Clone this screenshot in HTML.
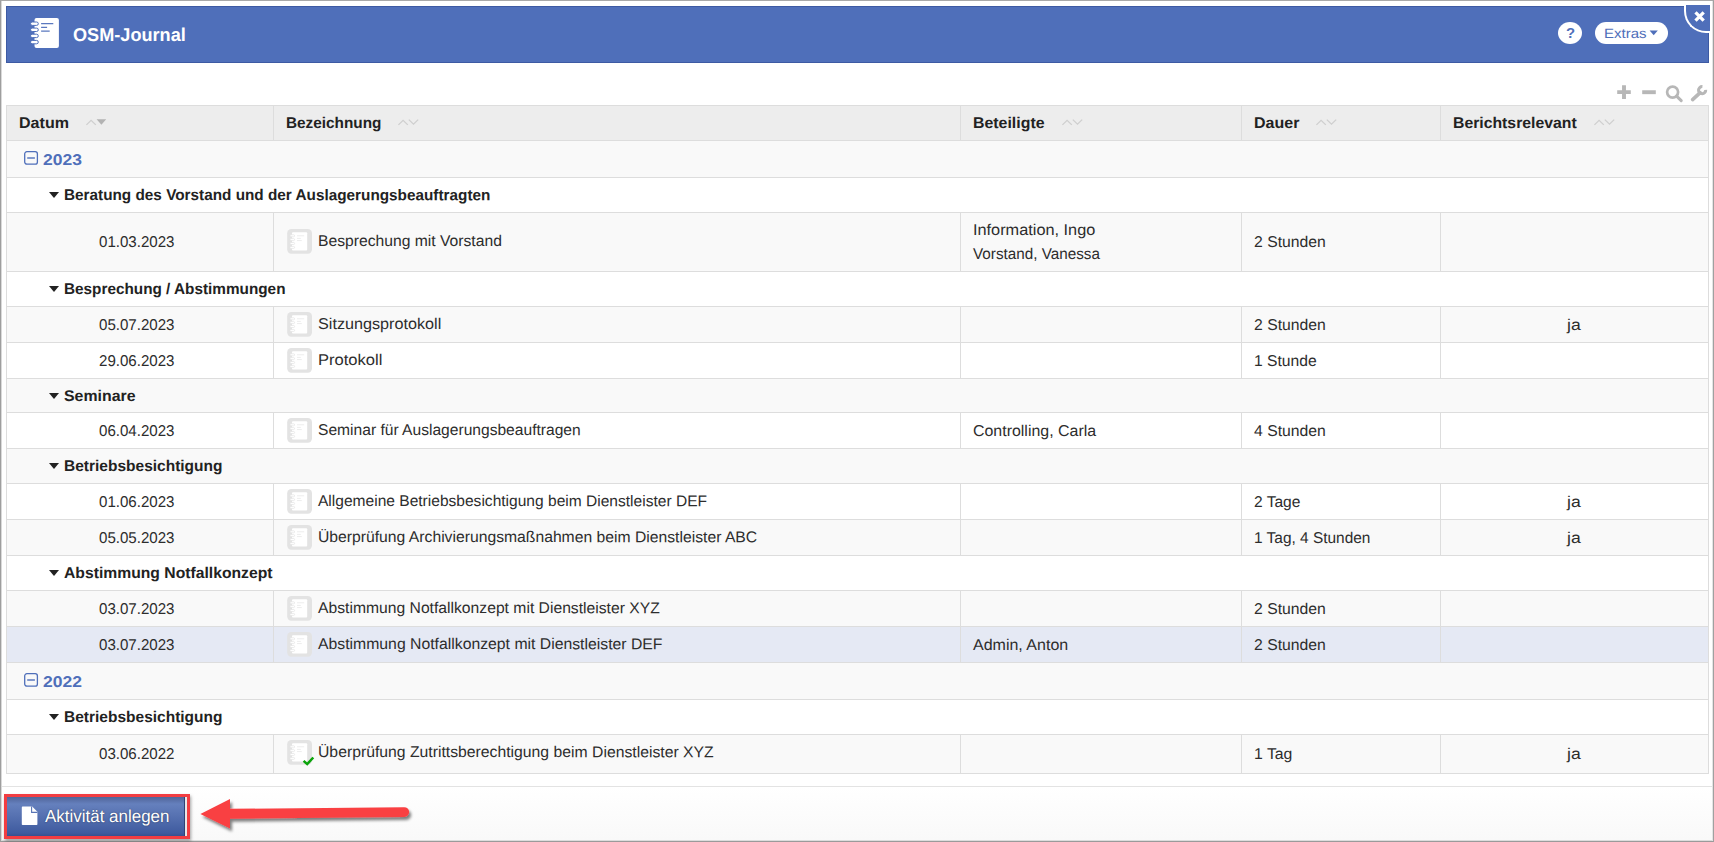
<!DOCTYPE html>
<html><head><meta charset="utf-8">
<style>
*{box-sizing:border-box;margin:0;padding:0}
html,body{width:1714px;height:842px;overflow:hidden;background:#fff}
body{position:relative;font-family:"Liberation Sans",sans-serif;font-size:14.5px;color:#333}
.abs{position:absolute}
#frame{left:0;top:0;width:1714px;height:842px;border-top:1px solid #a9a9a9;border-left:1px solid #9e9e9e;border-right:1px solid #a0a0a0;border-bottom:1px solid #9a9a9a;box-shadow:inset 1px 0 0 #d9d9d9,inset -1px 0 0 #e4e4e4, inset 0 -1px 0 #dcdcdc}
#hdr{left:6px;top:6px;width:1703px;height:57px;background:#4f6fba;border:1px solid #3d5aa3}
#title{left:73px;top:22px;font-weight:bold;font-size:17.5px;color:#fff;line-height:24px;white-space:nowrap}
#close{left:1684px;top:5px;width:26px;height:28px;background:#4f6fba;border-left:2px solid #fff;border-bottom:2px solid #fff;border-bottom-left-radius:22px}
#help{left:1558px;top:22px;width:24px;height:22px;border-radius:50%;background:#fff;color:#4f6fba;font-weight:bold;font-size:14px;text-align:center;line-height:22px}
#extras{left:1595px;top:22px;width:73px;height:22px;border-radius:11px;background:#fff;color:#4f6fba;font-size:14.5px;line-height:22px;padding-left:10px;white-space:nowrap}
#tbl{left:6px;top:105px;width:1703px;height:669px;border:1px solid #ddd}
.row{position:absolute;left:7px;width:1701px;border-bottom:1px solid #ddd}
.odd{background:#f9f9f9}
.hl{background:#e5e9f4}
.th{background:#ededed}
.c{position:absolute;top:0;bottom:0;border-left:1px solid #ddd}
.t{position:absolute;white-space:nowrap;line-height:20px;transform-origin:0 50%}
.vl{width:1px;background:#ddd}
.hl{left:7px;width:1701px;height:1px;background:#ddd}
.b{font-weight:bold;color:#222}
.yr{color:#4f6fba;font-weight:bold;font-size:16.5px}
.tri{position:absolute;width:0;height:0;border-left:5px solid transparent;border-right:5px solid transparent;border-top:6px solid #222}
.ic{position:absolute;left:280px;width:25px;height:25px;border-radius:5px;background:#e4e4e4}
.ic i{position:absolute;left:6px;top:4px;width:14px;height:17px;background:#fff;border-radius:1px}
#foot{left:2px;top:786px;width:1710px;height:54px;border-top:1px solid #e3e3e3;background:linear-gradient(#fff,#f9f9f9)}
#btn{left:4px;top:794px;width:186px;height:45px;border:3px solid #f23d42;background:#e8e8e8;box-shadow:1px 2px 3px rgba(0,0,0,.35)}
#btn div{position:absolute;left:0;top:0;width:178px;height:39px;background:linear-gradient(#50659a 0,#566ca3 2px,#6580bd 7px,#5570b0 20px,#3f5b9f 36px,#37508f 39px);border-right:1px solid #2f4273}
#btn span{position:absolute;left:37px;top:9px;color:#fff;font-size:16.5px;line-height:20px;white-space:nowrap}
</style></head><body>
<svg width="0" height="0" style="position:absolute"><defs><g id="nb"><rect x="0.2" y="0" width="24.8" height="24.8" rx="4.2" fill="#e3e3e3"/><rect x="5" y="3.2" width="15.2" height="18.4" rx="1" fill="#fff"/><g fill="#fff" stroke="#e3e3e3" stroke-width="0.7"><rect x="3" y="5.8" width="4.6" height="2" rx="1"/><rect x="3" y="9.6" width="4.6" height="2" rx="1"/><rect x="3" y="13.5" width="4.6" height="2" rx="1"/><rect x="3" y="17.4" width="4.6" height="2" rx="1"/></g><path d="M10 6.8h7.2M10 9.4h3.8M10 11.6h4.8" stroke="#ededed" stroke-width="1"/></g></defs></svg>
<div class="abs" id="frame"></div>
<div class="abs" id="hdr"></div>
<div class="abs" id="help"></div>
<div class="abs" id="extras"></div>
<div class="abs" id="close"></div>
<div class="abs" id="tbl"></div>
<div class="abs" id="foot"></div>
<div class="abs" id="btn"><div></div></div>

<svg class="abs" style="left:28px;top:15px" width="34" height="36" viewBox="0 0 34 36">
<rect x="6.5" y="2.9" width="24.4" height="30.2" rx="2" fill="#fff"/>
<g fill="#fff" stroke="#4f6fba" stroke-width="1"><rect x="2.5" y="7" width="7.8" height="3.4" rx="1.7"/><rect x="2.5" y="13.1" width="7.8" height="3.4" rx="1.7"/><rect x="2.5" y="19.2" width="7.8" height="3.4" rx="1.7"/><rect x="2.5" y="25.4" width="7.8" height="3.4" rx="1.7"/></g>
<g stroke="#5a78bf" stroke-width="1.3"><path d="M13.1 8.7h12.2M13.1 12.3h6M13.1 16.2h8.6"/></g>
</svg>
<svg class="abs" style="left:1649px;top:30px" width="10" height="6" viewBox="0 0 10 6"><path d="M0.6 0.4h8.2L4.7 5.2z" fill="#4f6fba"/></svg>
<svg class="abs" style="left:1692px;top:9px" width="16" height="16" viewBox="0 0 16 16"><path d="M3.9 4.5l8.2 8.2M12.1 4.5l-8.2 8.2" stroke="#fff" stroke-width="3.3" fill="none" transform="translate(-0.4,-1.1)"/></svg>
<svg class="abs" style="left:1612px;top:82px" width="100" height="22" viewBox="0 0 100 22" fill="none" stroke="#b7b7b7">
<path d="M12 3.3v13.6M5.2 10.1h13.6" stroke-width="3.9"/>
<path d="M30.2 10.2h13.6" stroke-width="3.9"/>
<circle cx="60.6" cy="10.1" r="5.5" stroke-width="2.7"/><path d="M64.6 14.2l4.6 4.4" stroke-width="3.1" stroke-linecap="round"/>
<path d="M80.6 17.6l7.6-7" stroke-width="3.6" stroke-linecap="round"/>
<path d="M93.69 7.89A3.6 3.6 0 1 1 90.41 4.61" stroke-width="3"/>
</svg>
<svg class="abs" style="left:21px;top:806px" width="18" height="20" viewBox="0 0 18 20"><path d="M1.6 0.6h9.6l5.2 5.2v12.4a0.8 0.8 0 0 1 -0.8 0.8h-14a0.8 0.8 0 0 1 -0.8 -0.8v-16.8a0.8 0.8 0 0 1 0.8 -0.8z" fill="#fff"/><path d="M10.6 0.6v5.8h5.8" fill="none" stroke="#5874b5" stroke-width="1.1"/></svg>
<svg class="abs" style="left:190px;top:790px;overflow:visible" width="240" height="50" viewBox="0 0 240 50">
<g filter="url(#ds)"><path d="M10.4 23.9L40 8.9V18.8L214.2 17.2a4.9 4.9 0 0 1 0.1 9.8L40 28.8V38.5z" fill="#f93f43"/></g>
<defs><filter id="ds" x="-10%" y="-30%" width="120%" height="180%"><feGaussianBlur in="SourceAlpha" stdDeviation="1.6"/><feOffset dx="1.5" dy="3"/><feComponentTransfer><feFuncA type="linear" slope="0.5"/></feComponentTransfer><feMerge><feMergeNode/><feMergeNode in="SourceGraphic"/></feMerge></filter></defs>
</svg>
<div class="abs" style="left:7px;top:106px;width:1701px;height:34px;background:#ededed"></div>
<div class="abs vl" style="left:273px;top:106px;height:34px"></div>
<div class="abs vl" style="left:960px;top:106px;height:34px"></div>
<div class="abs vl" style="left:1241px;top:106px;height:34px"></div>
<div class="abs vl" style="left:1440px;top:106px;height:34px"></div>
<svg class="abs" style="left:86.2px;top:118px" width="22" height="9"><path d="M0.4 6.9l4.7-4.6 4.7 4.6" fill="none" stroke="#cfcfcf" stroke-width="1.3"/><path d="M10.6 1.2h9.6l-4.8 5.6z" fill="#b3b3b3"/></svg>
<svg class="abs" style="left:398.4px;top:118px" width="22" height="9"><path d="M0.4 6.9l4.7-4.6 4.7 4.6" fill="none" stroke="#cfcfcf" stroke-width="1.3"/><path d="M10.8 1.6l4.7 4.6 4.7-4.6" fill="none" stroke="#cfcfcf" stroke-width="1.3"/></svg>
<svg class="abs" style="left:1061.5px;top:118px" width="22" height="9"><path d="M0.4 6.9l4.7-4.6 4.7 4.6" fill="none" stroke="#cfcfcf" stroke-width="1.3"/><path d="M10.8 1.6l4.7 4.6 4.7-4.6" fill="none" stroke="#cfcfcf" stroke-width="1.3"/></svg>
<svg class="abs" style="left:1316.4px;top:118px" width="22" height="9"><path d="M0.4 6.9l4.7-4.6 4.7 4.6" fill="none" stroke="#cfcfcf" stroke-width="1.3"/><path d="M10.8 1.6l4.7 4.6 4.7-4.6" fill="none" stroke="#cfcfcf" stroke-width="1.3"/></svg>
<svg class="abs" style="left:1593.8px;top:118px" width="22" height="9"><path d="M0.4 6.9l4.7-4.6 4.7 4.6" fill="none" stroke="#cfcfcf" stroke-width="1.3"/><path d="M10.8 1.6l4.7 4.6 4.7-4.6" fill="none" stroke="#cfcfcf" stroke-width="1.3"/></svg>
<div class="abs" style="left:7px;top:141px;width:1701px;height:36px;background:#f9f9f9"></div>
<svg class="abs" style="left:24px;top:151.0px" width="15" height="15" viewBox="0 0 15 15"><rect x="0.7" y="0.7" width="12.7" height="12.5" rx="2.2" fill="none" stroke="#4f6fba" stroke-width="1.3"/><path d="M3.2 7h7.7" stroke="#4f6fba" stroke-width="1.4"/></svg>
<div class="abs" style="left:7px;top:178px;width:1701px;height:34px;background:#ffffff"></div>
<div class="tri" style="left:49px;top:192.0px"></div>
<div class="abs" style="left:7px;top:213px;width:1701px;height:58px;background:#f9f9f9"></div>
<div class="abs vl" style="left:273px;top:213px;height:58px"></div>
<div class="abs vl" style="left:960px;top:213px;height:58px"></div>
<div class="abs vl" style="left:1241px;top:213px;height:58px"></div>
<div class="abs vl" style="left:1440px;top:213px;height:58px"></div>
<svg class="abs" style="left:287px;top:229.3px" width="28" height="28"><use href="#nb"/></svg>
<div class="abs" style="left:7px;top:272px;width:1701px;height:34px;background:#ffffff"></div>
<div class="tri" style="left:49px;top:286.0px"></div>
<div class="abs" style="left:7px;top:307px;width:1701px;height:35px;background:#f9f9f9"></div>
<div class="abs vl" style="left:273px;top:307px;height:35px"></div>
<div class="abs vl" style="left:960px;top:307px;height:35px"></div>
<div class="abs vl" style="left:1241px;top:307px;height:35px"></div>
<div class="abs vl" style="left:1440px;top:307px;height:35px"></div>
<svg class="abs" style="left:287px;top:311.8px" width="28" height="28"><use href="#nb"/></svg>
<div class="abs" style="left:7px;top:343px;width:1701px;height:35px;background:#ffffff"></div>
<div class="abs vl" style="left:273px;top:343px;height:35px"></div>
<div class="abs vl" style="left:960px;top:343px;height:35px"></div>
<div class="abs vl" style="left:1241px;top:343px;height:35px"></div>
<div class="abs vl" style="left:1440px;top:343px;height:35px"></div>
<svg class="abs" style="left:287px;top:347.8px" width="28" height="28"><use href="#nb"/></svg>
<div class="abs" style="left:7px;top:379px;width:1701px;height:33px;background:#f9f9f9"></div>
<div class="tri" style="left:49px;top:392.5px"></div>
<div class="abs" style="left:7px;top:413px;width:1701px;height:35px;background:#ffffff"></div>
<div class="abs vl" style="left:273px;top:413px;height:35px"></div>
<div class="abs vl" style="left:960px;top:413px;height:35px"></div>
<div class="abs vl" style="left:1241px;top:413px;height:35px"></div>
<div class="abs vl" style="left:1440px;top:413px;height:35px"></div>
<svg class="abs" style="left:287px;top:417.8px" width="28" height="28"><use href="#nb"/></svg>
<div class="abs" style="left:7px;top:449px;width:1701px;height:34px;background:#f9f9f9"></div>
<div class="tri" style="left:49px;top:463.0px"></div>
<div class="abs" style="left:7px;top:484px;width:1701px;height:35px;background:#ffffff"></div>
<div class="abs vl" style="left:273px;top:484px;height:35px"></div>
<div class="abs vl" style="left:960px;top:484px;height:35px"></div>
<div class="abs vl" style="left:1241px;top:484px;height:35px"></div>
<div class="abs vl" style="left:1440px;top:484px;height:35px"></div>
<svg class="abs" style="left:287px;top:488.8px" width="28" height="28"><use href="#nb"/></svg>
<div class="abs" style="left:7px;top:520px;width:1701px;height:35px;background:#f9f9f9"></div>
<div class="abs vl" style="left:273px;top:520px;height:35px"></div>
<div class="abs vl" style="left:960px;top:520px;height:35px"></div>
<div class="abs vl" style="left:1241px;top:520px;height:35px"></div>
<div class="abs vl" style="left:1440px;top:520px;height:35px"></div>
<svg class="abs" style="left:287px;top:524.8px" width="28" height="28"><use href="#nb"/></svg>
<div class="abs" style="left:7px;top:556px;width:1701px;height:34px;background:#ffffff"></div>
<div class="tri" style="left:49px;top:570.0px"></div>
<div class="abs" style="left:7px;top:591px;width:1701px;height:35px;background:#f9f9f9"></div>
<div class="abs vl" style="left:273px;top:591px;height:35px"></div>
<div class="abs vl" style="left:960px;top:591px;height:35px"></div>
<div class="abs vl" style="left:1241px;top:591px;height:35px"></div>
<div class="abs vl" style="left:1440px;top:591px;height:35px"></div>
<svg class="abs" style="left:287px;top:595.8px" width="28" height="28"><use href="#nb"/></svg>
<div class="abs" style="left:7px;top:627px;width:1701px;height:35px;background:#e5e9f4"></div>
<div class="abs vl" style="left:273px;top:627px;height:35px"></div>
<div class="abs vl" style="left:960px;top:627px;height:35px"></div>
<div class="abs vl" style="left:1241px;top:627px;height:35px"></div>
<div class="abs vl" style="left:1440px;top:627px;height:35px"></div>
<svg class="abs" style="left:287px;top:631.8px" width="28" height="28"><use href="#nb"/></svg>
<div class="abs" style="left:7px;top:663px;width:1701px;height:36px;background:#f9f9f9"></div>
<svg class="abs" style="left:24px;top:673.0px" width="15" height="15" viewBox="0 0 15 15"><rect x="0.7" y="0.7" width="12.7" height="12.5" rx="2.2" fill="none" stroke="#4f6fba" stroke-width="1.3"/><path d="M3.2 7h7.7" stroke="#4f6fba" stroke-width="1.4"/></svg>
<div class="abs" style="left:7px;top:700px;width:1701px;height:34px;background:#ffffff"></div>
<div class="tri" style="left:49px;top:714.0px"></div>
<div class="abs" style="left:7px;top:735px;width:1701px;height:38px;background:#f9f9f9"></div>
<div class="abs vl" style="left:273px;top:735px;height:38px"></div>
<div class="abs vl" style="left:960px;top:735px;height:38px"></div>
<div class="abs vl" style="left:1241px;top:735px;height:38px"></div>
<div class="abs vl" style="left:1440px;top:735px;height:38px"></div>
<svg class="abs" style="left:287px;top:740.0px" width="28" height="28"><use href="#nb"/><path d="M16.6 20.9L20.2 24.1L26.3 17.5" fill="none" stroke="#0aa40a" stroke-width="2.5"/></svg>
<div class="abs hl" style="top:140px"></div>
<div class="abs hl" style="top:177px"></div>
<div class="abs hl" style="top:212px"></div>
<div class="abs hl" style="top:271px"></div>
<div class="abs hl" style="top:306px"></div>
<div class="abs hl" style="top:342px"></div>
<div class="abs hl" style="top:378px"></div>
<div class="abs hl" style="top:412px"></div>
<div class="abs hl" style="top:448px"></div>
<div class="abs hl" style="top:483px"></div>
<div class="abs hl" style="top:519px"></div>
<div class="abs hl" style="top:555px"></div>
<div class="abs hl" style="top:590px"></div>
<div class="abs hl" style="top:626px"></div>
<div class="abs hl" style="top:662px"></div>
<div class="abs hl" style="top:699px"></div>
<div class="abs hl" style="top:734px"></div>
<div class="t" style="left:19.3px;top:113px;font-size:15.5px;font-weight:bold;color:#222;transform:matrix(1.0366,0.0005,0,1,0,0)">Datum</div>
<div class="t" style="left:286.3px;top:113px;font-size:15.5px;font-weight:bold;color:#222;transform:matrix(0.9901,0.0005,0,1,0,0)">Bezeichnung</div>
<div class="t" style="left:972.9px;top:113px;font-size:15.5px;font-weight:bold;color:#222;transform:matrix(1.0249,0.0005,0,1,0,0)">Beteiligte</div>
<div class="t" style="left:1254.3px;top:113px;font-size:15.5px;font-weight:bold;color:#222;transform:matrix(1.0333,0.0005,0,1,0,0)">Dauer</div>
<div class="t" style="left:1453.0px;top:113px;font-size:15.5px;font-weight:bold;color:#222;transform:matrix(1.0182,0.0005,0,1,0,0)">Berichtsrelevant</div>
<div class="t" style="left:42.6px;top:150px;font-size:15.6px;font-weight:bold;color:#4f6fba;transform:matrix(1.1209,0.0005,0,1,0,0)">2023</div>
<div class="t" style="left:42.6px;top:672px;font-size:15.6px;font-weight:bold;color:#4f6fba;transform:matrix(1.1209,0.0005,0,1,0,0)">2022</div>
<div class="t" style="left:64.2px;top:185px;font-size:15.5px;font-weight:bold;color:#222;transform:matrix(0.9882,0.0005,0,1,0,0)">Beratung des Vorstand und der Auslagerungsbeauftragten</div>
<div class="t" style="left:64.2px;top:279px;font-size:15.5px;font-weight:bold;color:#222;transform:matrix(0.9879,0.0005,0,1,0,0)">Besprechung / Abstimmungen</div>
<div class="t" style="left:64.2px;top:386px;font-size:15.5px;font-weight:bold;color:#222;transform:matrix(1.0244,0.0005,0,1,0,0)">Seminare</div>
<div class="t" style="left:64.2px;top:456px;font-size:15.5px;font-weight:bold;color:#222;transform:matrix(1.0002,0.0005,0,1,0,0)">Betriebsbesichtigung</div>
<div class="t" style="left:64.2px;top:563px;font-size:15.5px;font-weight:bold;color:#222;transform:matrix(1.0131,0.0005,0,1,0,0)">Abstimmung Notfallkonzept</div>
<div class="t" style="left:64.2px;top:707px;font-size:15.5px;font-weight:bold;color:#222;transform:matrix(1.0002,0.0005,0,1,0,0)">Betriebsbesichtigung</div>
<div class="t" style="left:98.8px;top:232px;font-size:15.6px;color:#2d2d2d;transform:matrix(0.9674,0.0005,0,1,0,0)">01.03.2023</div>
<div class="t" style="left:318.0px;top:231px;font-size:15.6px;color:#2d2d2d;transform:matrix(1.0054,0.0005,0,1,0,0)">Besprechung mit Vorstand</div>
<div class="t" style="left:1254.3px;top:232px;font-size:15.6px;color:#2d2d2d;transform:matrix(1.0097,0.0005,0,1,0,0)">2 Stunden</div>
<div class="t" style="left:98.8px;top:315px;font-size:15.6px;color:#2d2d2d;transform:matrix(0.9674,0.0005,0,1,0,0)">05.07.2023</div>
<div class="t" style="left:318.0px;top:314px;font-size:15.6px;color:#2d2d2d;transform:matrix(1.0382,0.0005,0,1,0,0)">Sitzungsprotokoll</div>
<div class="t" style="left:1254.3px;top:315px;font-size:15.6px;color:#2d2d2d;transform:matrix(1.0097,0.0005,0,1,0,0)">2 Stunden</div>
<div class="t" style="left:1567.3px;top:315px;font-size:15.6px;color:#2d2d2d;transform:matrix(1.1284,0.0005,0,1,0,0)">ja</div>
<div class="t" style="left:98.8px;top:351px;font-size:15.6px;color:#2d2d2d;transform:matrix(0.9674,0.0005,0,1,0,0)">29.06.2023</div>
<div class="t" style="left:318.0px;top:350px;font-size:15.6px;color:#2d2d2d;transform:matrix(1.0614,0.0005,0,1,0,0)">Protokoll</div>
<div class="t" style="left:1254.3px;top:351px;font-size:15.6px;color:#2d2d2d;transform:matrix(1.0042,0.0005,0,1,0,0)">1 Stunde</div>
<div class="t" style="left:98.8px;top:421px;font-size:15.6px;color:#2d2d2d;transform:matrix(0.9674,0.0005,0,1,0,0)">06.04.2023</div>
<div class="t" style="left:318.0px;top:420px;font-size:15.6px;color:#2d2d2d;transform:matrix(1.0001,0.0005,0,1,0,0)">Seminar für Auslagerungsbeauftragen</div>
<div class="t" style="left:972.5px;top:421px;font-size:15.6px;color:#2d2d2d;transform:matrix(1.0217,0.0005,0,1,0,0)">Controlling, Carla</div>
<div class="t" style="left:1254.3px;top:421px;font-size:15.6px;color:#2d2d2d;transform:matrix(1.0097,0.0005,0,1,0,0)">4 Stunden</div>
<div class="t" style="left:98.8px;top:492px;font-size:15.6px;color:#2d2d2d;transform:matrix(0.9674,0.0005,0,1,0,0)">01.06.2023</div>
<div class="t" style="left:318.0px;top:491px;font-size:15.6px;color:#2d2d2d;transform:matrix(0.9974,0.0005,0,1,0,0)">Allgemeine Betriebsbesichtigung beim Dienstleister DEF</div>
<div class="t" style="left:1254.3px;top:492px;font-size:15.6px;color:#2d2d2d;transform:matrix(0.9968,0.0005,0,1,0,0)">2 Tage</div>
<div class="t" style="left:1567.3px;top:492px;font-size:15.6px;color:#2d2d2d;transform:matrix(1.1284,0.0005,0,1,0,0)">ja</div>
<div class="t" style="left:98.8px;top:528px;font-size:15.6px;color:#2d2d2d;transform:matrix(0.9674,0.0005,0,1,0,0)">05.05.2023</div>
<div class="t" style="left:318.0px;top:527px;font-size:15.6px;color:#2d2d2d;transform:matrix(1.0074,0.0005,0,1,0,0)">Überprüfung Archivierungsmaßnahmen beim Dienstleister ABC</div>
<div class="t" style="left:1254.3px;top:528px;font-size:15.6px;color:#2d2d2d;transform:matrix(0.9895,0.0005,0,1,0,0)">1 Tag, 4 Stunden</div>
<div class="t" style="left:1567.3px;top:528px;font-size:15.6px;color:#2d2d2d;transform:matrix(1.1284,0.0005,0,1,0,0)">ja</div>
<div class="t" style="left:98.8px;top:599px;font-size:15.6px;color:#2d2d2d;transform:matrix(0.9674,0.0005,0,1,0,0)">03.07.2023</div>
<div class="t" style="left:318.0px;top:598px;font-size:15.6px;color:#2d2d2d;transform:matrix(1.0061,0.0005,0,1,0,0)">Abstimmung Notfallkonzept mit Dienstleister XYZ</div>
<div class="t" style="left:1254.3px;top:599px;font-size:15.6px;color:#2d2d2d;transform:matrix(1.0097,0.0005,0,1,0,0)">2 Stunden</div>
<div class="t" style="left:98.8px;top:635px;font-size:15.6px;color:#2d2d2d;transform:matrix(0.9674,0.0005,0,1,0,0)">03.07.2023</div>
<div class="t" style="left:318.0px;top:634px;font-size:15.6px;color:#2d2d2d;transform:matrix(1.0115,0.0005,0,1,0,0)">Abstimmung Notfallkonzept mit Dienstleister DEF</div>
<div class="t" style="left:972.5px;top:635px;font-size:15.6px;color:#2d2d2d;transform:matrix(1.0262,0.0005,0,1,0,0)">Admin, Anton</div>
<div class="t" style="left:1254.3px;top:635px;font-size:15.6px;color:#2d2d2d;transform:matrix(1.0097,0.0005,0,1,0,0)">2 Stunden</div>
<div class="t" style="left:98.8px;top:744px;font-size:15.6px;color:#2d2d2d;transform:matrix(0.9674,0.0005,0,1,0,0)">03.06.2022</div>
<div class="t" style="left:318.0px;top:742px;font-size:15.6px;color:#2d2d2d;transform:matrix(1.0100,0.0005,0,1,0,0)">Überprüfung Zutrittsberechtigung beim Dienstleister XYZ</div>
<div class="t" style="left:1254.3px;top:744px;font-size:15.6px;color:#2d2d2d;transform:matrix(1.0139,0.0005,0,1,0,0)">1 Tag</div>
<div class="t" style="left:1567.3px;top:744px;font-size:15.6px;color:#2d2d2d;transform:matrix(1.1284,0.0005,0,1,0,0)">ja</div>
<div class="t" style="left:972.5px;top:220px;font-size:15.6px;color:#2d2d2d;transform:matrix(1.0450,0.0005,0,1,0,0)">Information, Ingo</div>
<div class="t" style="left:972.5px;top:244px;font-size:15.6px;color:#2d2d2d;transform:matrix(0.9780,0.0005,0,1,0,0)">Vorstand, Vanessa</div>
<div class="t" style="left:72.5px;top:25px;font-size:18.6px;font-weight:bold;color:#fff;transform:matrix(0.9749,0.0005,0,1,0,0)">OSM-Journal</div>
<div class="t" style="left:44.6px;top:806px;font-size:17.4px;color:#fff;text-shadow:0 0 1.5px rgba(0,0,0,.55);transform:matrix(0.9755,0.0005,0,1,0,0)">Aktivität anlegen</div>
<div class="t" style="left:1604.1px;top:24px;font-size:13.6px;color:#4f6fba;transform:matrix(1.1056,0.0005,0,1,0,0)">Extras</div>
<div class="t" style="left:1565.9px;top:23px;font-size:14.5px;font-weight:bold;color:#4f6fba;transform:matrix(1.0272,0.0005,0,1,0,0)">?</div>
</body></html>
